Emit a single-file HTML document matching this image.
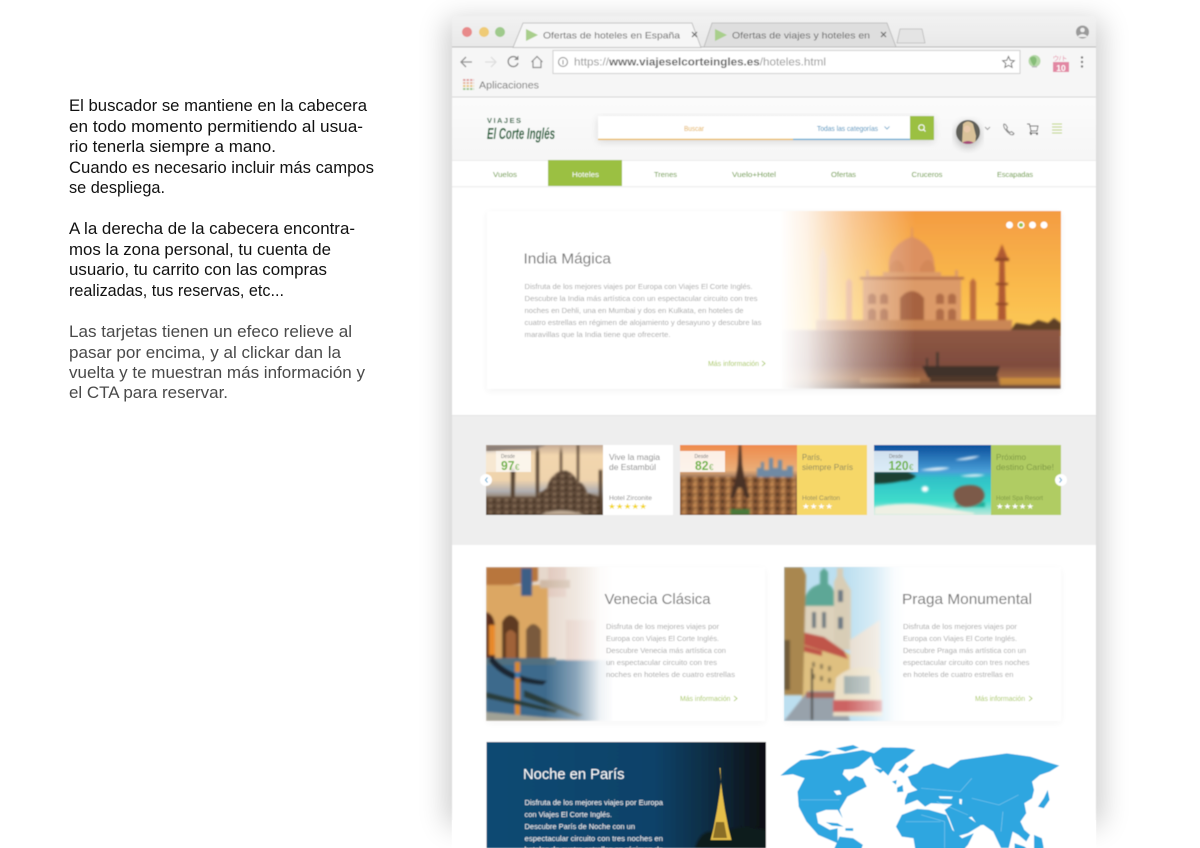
<!DOCTYPE html>
<html lang="es"><head><meta charset="utf-8"><title>Viajes El Corte Inglés</title>
<style>
html,body{margin:0;padding:0;background:#fff;width:1200px;height:848px;overflow:hidden}
svg{display:block}
text{font-family:"Liberation Sans",sans-serif}
</style></head><body>
<svg xmlns="http://www.w3.org/2000/svg" width="1200" height="848" viewBox="0 0 1200 848">
<defs>
<filter id="sh" x="-10%" y="-10%" width="120%" height="120%"><feGaussianBlur stdDeviation="14"/></filter>
<filter id="s4" x="-10%" y="-20%" width="120%" height="140%"><feGaussianBlur stdDeviation="4"/></filter>
<filter id="b" x="-2%" y="-2%" width="104%" height="104%"><feGaussianBlur stdDeviation="0.42"/></filter>
<filter id="b1" x="-5%" y="-5%" width="110%" height="110%"><feGaussianBlur stdDeviation="1"/></filter>
<linearGradient id="sky" x1="0" y1="0" x2="0" y2="1"><stop offset="0" stop-color="#f49c42"/><stop offset=".55" stop-color="#f9b74b"/><stop offset="1" stop-color="#fdcb57"/></linearGradient>
<linearGradient id="water" x1="0" y1="0" x2="0" y2="1"><stop offset="0" stop-color="#8f5844"/><stop offset=".6" stop-color="#7f4c3e"/><stop offset=".82" stop-color="#a56c45"/><stop offset="1" stop-color="#5a4136"/></linearGradient>
<linearGradient id="fadeH" x1="0" y1="0" x2="1" y2="0"><stop offset="0" stop-color="#fff"/><stop offset=".2" stop-color="#fff" stop-opacity=".86"/><stop offset=".55" stop-color="#fff" stop-opacity=".42"/><stop offset="1" stop-color="#fff" stop-opacity="0"/></linearGradient>
<linearGradient id="fadeC" x1="0" y1="0" x2="1" y2="0"><stop offset="0" stop-color="#fff" stop-opacity="0"/><stop offset=".45" stop-color="#fff" stop-opacity=".4"/><stop offset=".8" stop-color="#fff" stop-opacity=".92"/><stop offset="1" stop-color="#fff"/></linearGradient>
<linearGradient id="header" x1="0" y1="0" x2="0" y2="1"><stop offset="0" stop-color="#fbfbfb"/><stop offset="1" stop-color="#f6f6f6"/></linearGradient>
<linearGradient id="tabbar" x1="0" y1="0" x2="0" y2="1"><stop offset="0" stop-color="#f2f2f2"/><stop offset="1" stop-color="#e8e8e8"/></linearGradient>
<linearGradient id="noche" x1="0" y1="0" x2="1" y2="0"><stop offset="0" stop-color="#0b4a73"/><stop offset=".6" stop-color="#0a4269"/><stop offset=".8" stop-color="#0c2c42"/><stop offset="1" stop-color="#0c0e11"/></linearGradient>
<linearGradient id="ist" x1="0" y1="0" x2="0" y2="1"><stop offset="0" stop-color="#c4aa94"/><stop offset=".15" stop-color="#f2d6ae"/><stop offset=".5" stop-color="#efd3ad"/><stop offset=".66" stop-color="#b0aeb0"/><stop offset=".78" stop-color="#8a7560"/><stop offset="1" stop-color="#54402f"/></linearGradient>
<linearGradient id="par" x1="0" y1="0" x2="0" y2="1"><stop offset="0" stop-color="#ee8b4c"/><stop offset=".36" stop-color="#eaae78"/><stop offset=".46" stop-color="#a07a60"/><stop offset="1" stop-color="#6f4528"/></linearGradient>
<linearGradient id="car" x1="0" y1="0" x2="0" y2="1"><stop offset="0" stop-color="#0b4f9c"/><stop offset=".38" stop-color="#4aa0d8"/><stop offset=".47" stop-color="#2fc0c8"/><stop offset=".8" stop-color="#3fdccb"/><stop offset="1" stop-color="#bfe8dc"/></linearGradient>
<pattern id="city" width="11" height="7" patternUnits="userSpaceOnUse"><rect width="11" height="7" fill="#8a5a36"/><rect x="0" y="0" width="4" height="3" fill="#c98c54"/><rect x="6" y="3" width="3" height="3" fill="#4a2f20"/><rect x="1" y="5" width="3" height="1" fill="#dca566"/></pattern>
<pattern id="city2" width="8" height="6" patternUnits="userSpaceOnUse"><rect width="8" height="6" fill="#5f4a38"/><rect x="1" y="1" width="3" height="2" fill="#8d755d"/><rect x="5" y="3" width="2" height="2" fill="#2e2219"/></pattern>
<clipPath id="cHero"><rect x="780" y="211" width="281" height="178"/></clipPath>
<clipPath id="c1"><rect x="486" y="445" width="117" height="70"/></clipPath>
<clipPath id="c2"><rect x="680" y="445" width="117" height="70"/></clipPath>
<clipPath id="c3"><rect x="874" y="445" width="117" height="70"/></clipPath>
<clipPath id="cV"><rect x="486" y="567" width="127" height="154"/></clipPath>
<clipPath id="cP"><rect x="784" y="567" width="122" height="154"/></clipPath>
<clipPath id="cN"><rect x="486" y="742" width="280" height="106"/></clipPath>
<clipPath id="cAv"><circle cx="968" cy="132" r="12"/></clipPath>
</defs>

<rect width="1200" height="848" fill="#fff"/>

<!-- Left copy -->
<g font-size="16.500" fill="#111">
<text x="69" y="111" textLength="298" lengthAdjust="spacingAndGlyphs">El buscador se mantiene en la cabecera</text>
<text x="69" y="132" textLength="294" lengthAdjust="spacingAndGlyphs">en todo momento permitiendo al usua-</text>
<text x="69" y="152" textLength="207" lengthAdjust="spacingAndGlyphs">rio tenerla siempre a mano.</text>
<text x="69" y="173" textLength="305" lengthAdjust="spacingAndGlyphs">Cuando es necesario incluir más campos</text>
<text x="69" y="193" textLength="96" lengthAdjust="spacingAndGlyphs">se despliega.</text>
<text x="69" y="234" textLength="286" lengthAdjust="spacingAndGlyphs">A la derecha de la cabecera encontra-</text>
<text x="69" y="255" textLength="262" lengthAdjust="spacingAndGlyphs">mos la zona personal, tu cuenta de</text>
<text x="69" y="275" textLength="258" lengthAdjust="spacingAndGlyphs">usuario, tu carrito con las compras</text>
<text x="69" y="296" textLength="215" lengthAdjust="spacingAndGlyphs">realizadas, tus reservas, etc...</text>
</g>
<g font-size="16.500" fill="#4a4a4a">
<text x="69" y="337" textLength="283" lengthAdjust="spacingAndGlyphs">Las tarjetas tienen un efeco relieve al</text>
<text x="69" y="358" textLength="272" lengthAdjust="spacingAndGlyphs">pasar por encima, y al clickar dan la</text>
<text x="69" y="378" textLength="296" lengthAdjust="spacingAndGlyphs">vuelta y te muestran más información y</text>
<text x="69" y="398" textLength="159" lengthAdjust="spacingAndGlyphs">el CTA para reservar.</text>
</g>

<!-- Window shadow -->
<rect x="446" y="20" width="656" height="806" fill="#000" opacity=".2" filter="url(#sh)"/>
<rect x="452" y="820" width="644" height="28" fill="#fff"/>

<g filter="url(#b)">
<!-- Window -->
<path d="M452 22q0-6 6-6h632q6 0 6 6v826H452z" fill="#fff"/>
<path d="M452 22q0-6 6-6h632q6 0 6 6v25H452z" fill="url(#tabbar)"/>
<rect x="452" y="47" width="644" height="50" fill="#f6f6f6"/>
<rect x="452" y="46.500" width="644" height="1" fill="#b8b8b8"/>
<rect x="452" y="96.500" width="644" height="1" fill="#d5d5d5"/>
<circle cx="467" cy="32" r="5" fill="#e88a8a"/><circle cx="484" cy="32" r="5" fill="#efcb76"/><circle cx="500" cy="32" r="5" fill="#9fca8c"/>
<!-- tabs -->
<path d="M897 43l3-14h22l3 14z" fill="#e4e4e4" stroke="#bbb" stroke-width=".8"/>
<path d="M704 47l8-24h175l9 24z" fill="#dedede" stroke="#b5b5b5" stroke-width=".8"/>
<path d="M513 47.500l10-24.500h169l9 24.500z" fill="#f6f6f6" stroke="#b5b5b5" stroke-width=".8"/>
<path d="M526 29l12 6-12 6z" fill="#a9cf8c"/>
<path d="M715 29l12 6-12 6z" fill="#a9cf8c"/>
<text x="543" y="38.500" font-size="9.500" fill="#666" textLength="137" lengthAdjust="spacingAndGlyphs">Ofertas de hoteles en España</text>
<text x="732" y="38.500" font-size="9.500" fill="#666" textLength="138" lengthAdjust="spacingAndGlyphs">Ofertas de viajes y hoteles en</text>
<path d="M692 32l5 5M697 32l-5 5M881 32l5 5M886 32l-5 5" stroke="#666" stroke-width="1.200"/>
<circle cx="1082.500" cy="32" r="6.500" fill="#9a9a9a"/><circle cx="1082.500" cy="30" r="2.300" fill="#eee"/><path d="M1078 36q4.500-4 9 0v1h-9z" fill="#eee"/>
<!-- toolbar -->
<path d="M472 62h-11M466 57l-5 5 5 5" fill="none" stroke="#909090" stroke-width="1.300"/>
<path d="M485 62h11M491 57l5 5-5 5" fill="none" stroke="#dedede" stroke-width="1.300"/>
<path d="M517.500 59a5 5 0 1 0 .5 4" fill="none" stroke="#8a8a8a" stroke-width="1.400"/><path d="M518.500 55.500v4.500h-4.500z" fill="#8a8a8a"/>
<path d="M531.500 62l5.500-5.500 5.500 5.500M533 61v6.500h8V61" fill="none" stroke="#8a8a8a" stroke-width="1.200"/>
<rect x="553" y="50.500" width="467" height="23" fill="#fff" stroke="#d0d0d0"/>
<circle cx="563" cy="62" r="4.500" fill="none" stroke="#888"/><path d="M563 60v4.500" stroke="#888"/>
<text x="574" y="65.500" font-size="11" fill="#999" textLength="252" lengthAdjust="spacingAndGlyphs">https://<tspan fill="#666" font-weight="bold">www.viajeselcorteingles.es</tspan>/hoteles.html</text>
<path d="M1008.500 56.500l1.700 3.800 4.100.4-3.100 2.700.9 4-3.600-2.100-3.600 2.100.9-4-3.100-2.700 4.100-.4z" fill="none" stroke="#777"/>
<circle cx="1034.500" cy="61" r="6" fill="#b4d8a6"/><path d="M1030 58q4-3 6 0t-2 8q-3-3-4-8z" fill="#86bd78"/><rect x="1032" y="66" width="5" height="1.500" fill="#bbb"/>
<rect x="1053" y="62" width="16" height="10" fill="#e287a3"/><text x="1061" y="71" font-size="8.500" font-weight="bold" fill="#fff" text-anchor="middle">10</text><text x="1060" y="60.500" font-size="6.500" fill="#e58aa5" text-anchor="middle">ウ/ト</text>
<circle cx="1082" cy="57.500" r="1.200" fill="#777"/><circle cx="1082" cy="62" r="1.200" fill="#777"/><circle cx="1082" cy="66.500" r="1.200" fill="#777"/>
<g fill="none" stroke-width="2" stroke-dasharray="2.500 1"><path d="M463 80h11" stroke="#e0a0a0"/><path d="M463 83h11" stroke="#e8b8a0"/><path d="M463 86h11" stroke="#e8c880"/><path d="M463 89h11" stroke="#a0c890"/></g>
<text x="479" y="88.500" font-size="10" fill="#777" textLength="60" lengthAdjust="spacingAndGlyphs">Aplicaciones</text>

<!-- Header -->
<rect x="452" y="97.500" width="644" height="63" fill="url(#header)"/>
<text x="487" y="123" font-size="7.500" font-weight="bold" fill="#1d5f38" textLength="34">VIAJES</text>
<text x="487" y="139" font-family="Liberation Serif" font-style="italic" font-size="16" font-weight="bold" fill="#125c30" textLength="68" lengthAdjust="spacingAndGlyphs">El Corte Inglés</text>
<rect x="598" y="118" width="336" height="24" fill="#000" opacity=".12" filter="url(#s4)"/>
<rect x="598" y="116" width="336" height="24" fill="#fff"/>
<rect x="598" y="138.800" width="195" height="1.200" fill="#e9b43e"/><rect x="793" y="138.800" width="117" height="1.200" fill="#4ba0cf"/>
<rect x="910" y="116" width="24" height="24" fill="#9bc043"/>
<circle cx="921.500" cy="127.500" r="2.800" fill="none" stroke="#fff"/><path d="M923.500 129.500l2 2" stroke="#fff"/>
<text x="684" y="131" font-size="7" fill="#e3ad44" textLength="20" lengthAdjust="spacingAndGlyphs">Buscar</text>
<text x="817" y="131" font-size="7" fill="#3e8fbd" textLength="61" lengthAdjust="spacingAndGlyphs">Todas las categorías</text>
<path d="M884.500 126.500l2.500 2.500 2.500-2.500" fill="none" stroke="#5b9dc5" stroke-width=".8"/>
<circle cx="968" cy="135" r="13" fill="#000" opacity=".22" filter="url(#s4)"/>
<circle cx="968" cy="132" r="12" fill="#5f5f58"/>
<g clip-path="url(#cAv)"><path d="M962 144l1-20q5-5 10 0l3 12-1 8z" fill="#d9c29a"/><path d="M958 146q10-10 20 0z" fill="#a54a78"/><circle cx="967" cy="129" r="3.500" fill="#e8c8aa"/></g>
<path d="M985 127l2.500 2.500 2.500-2.500" fill="none" stroke="#999"/>
<path d="M1004 124q-1 2 1 5t5.500 5.500q2.500 1 3.500-1l-2.500-2-1.500 1q-2-1-3.500-3.500l1-1.500-2-3z" fill="none" stroke="#777" stroke-width=".9"/>
<path d="M1027 124h2.500l1.500 7h6l1-5h-8M1031 131l-1 2h8" fill="none" stroke="#666" stroke-width=".9"/><circle cx="1031" cy="134" r="1" fill="#666"/><circle cx="1037" cy="134" r="1" fill="#666"/>
<path d="M1052 124h10M1052 127h10M1052 130h10M1052 133h10" stroke="#bcd470" stroke-width="1"/>

<!-- Nav -->
<rect x="452" y="160" width="644" height="1" fill="#ececec"/>
<rect x="452" y="161" width="644" height="25" fill="#fff"/>
<rect x="452" y="186" width="644" height="1.500" fill="#f0f0f0"/>
<rect x="548" y="160" width="74" height="26" fill="#9bc043"/>
<g font-size="7.500" fill="#5f962a" text-anchor="middle">
<text x="505" y="177" textLength="24" lengthAdjust="spacingAndGlyphs">Vuelos</text>
<text x="585.500" y="177" fill="#fff" textLength="27" lengthAdjust="spacingAndGlyphs">Hoteles</text>
<text x="665.500" y="177" textLength="23" lengthAdjust="spacingAndGlyphs">Trenes</text>
<text x="754" y="177" textLength="44" lengthAdjust="spacingAndGlyphs">Vuelo+Hotel</text>
<text x="843.500" y="177" textLength="25" lengthAdjust="spacingAndGlyphs">Ofertas</text>
<text x="927" y="177" textLength="31" lengthAdjust="spacingAndGlyphs">Cruceros</text>
<text x="1015" y="177" textLength="36" lengthAdjust="spacingAndGlyphs">Escapadas</text>
</g>

<!-- Hero -->
<rect x="487" y="213" width="574" height="178" fill="#000" opacity=".05" filter="url(#s4)"/>
<rect x="487" y="211" width="574" height="178" fill="#fff"/>
<g clip-path="url(#cHero)">
 <rect x="780" y="211" width="281" height="125" fill="url(#sky)"/>
 <g filter="url(#b1)">
 <path d="M911.500 227h1l.5 10q13 5 19 17 4 10 1 20h-43q-3-10 1-20 6-12 20-17z" fill="#dc9060"/>
 <path d="M889 274v-6q4-8 8-8t7 8v6zM920 274v-6q4-8 8-8t7 8v6z" fill="#d38858"/>
 <path d="M863 320v-40l3-4v-6h3v6h14v-4h58v4h14v-6h3v6l3 4v40z" fill="#dc9a68"/>
 <path d="M900 320v-22q12-14 24 0v22z" fill="#a66240"/>
 <path d="M868 320v-9q4-5 8 0v9zM880 320v-9q4-5 8 0v9zM936 320v-9q4-5 8 0v9zM948 320v-9q4-5 8 0v9zM868 304v-8q4-5 8 0v8zM880 304v-8q4-5 8 0v8zM936 304v-8q4-5 8 0v8zM948 304v-8q4-5 8 0v8z" fill="#b06d48"/>
 <rect x="860" y="277" width="104" height="2.500" fill="#b5704a"/>
 <path d="M998 320l1.500-62h-3l5.500-14 5.500 14h-3l1.500 62z" fill="#b05a30"/><rect x="995" y="258" width="14" height="3" fill="#8c4526"/><rect x="996" y="283" width="12" height="2" fill="#8c4526"/><rect x="996" y="303" width="12" height="2" fill="#8c4526"/>
 <path d="M970 320v-38l3-4 3 4v38z" fill="#c06e3e"/>
 <path d="M846 320v-38l3-4 3 4v38z" fill="#e2986a"/>
 <path d="M819 320v-62l4-12 4 12v62z" fill="#e6a878"/>
 <rect x="816" y="320" width="196" height="11" fill="#ca8755"/>
 <path d="M1010 331l6-8 14 2 8-5 10 3 6-5 7 5v8z" fill="#5e4028"/>
 <rect x="780" y="330" width="281" height="59" fill="url(#water)"/>
 <path d="M922 366h78l-4 12h-68z" fill="#3f322c"/><rect x="930" y="376" width="68" height="6" fill="#4f382c"/>
 <path d="M936 366v-14h3v14zM926 366v-8h2v8z" fill="#4a3a30"/>
 <rect x="1000" y="378" width="61" height="7" fill="#d99a3c" opacity=".75"/><rect x="860" y="378" width="60" height="5" fill="#c49060" opacity=".5"/>
 </g>
 <rect x="780" y="211" width="135" height="178" fill="url(#fadeH)"/>
</g>
<circle cx="1009.500" cy="225" r="3.500" fill="#fff"/><circle cx="1021" cy="225" r="3.500" fill="#fff" /><circle cx="1021" cy="225" r="2" fill="#9bc043"/><circle cx="1032.500" cy="225" r="3.500" fill="#fff"/><circle cx="1044" cy="225" r="3.500" fill="#fff"/>
<text x="523.500" y="263.500" font-size="15" fill="#777" textLength="87.500" lengthAdjust="spacingAndGlyphs">India Mágica</text>
<g font-size="7" fill="#a9a9a9">
<text x="524.500" y="289" textLength="228" lengthAdjust="spacingAndGlyphs">Disfruta de los mejores viajes por Europa con Viajes El Corte Inglés.</text>
<text x="524.500" y="301" textLength="233" lengthAdjust="spacingAndGlyphs">Descubre la India más artística con un espectacular circuito con tres</text>
<text x="524.500" y="313" textLength="219" lengthAdjust="spacingAndGlyphs">noches en Dehli, una en Mumbai y dos en Kulkata,  en hoteles de</text>
<text x="524.500" y="325" textLength="237" lengthAdjust="spacingAndGlyphs">cuatro estrellas en régimen de alojamiento y desayuno y descubre las</text>
<text x="524.500" y="337" textLength="146" lengthAdjust="spacingAndGlyphs">maravillas que la India tiene que ofrecerte.</text>
</g>
<text x="708" y="366" font-size="7" fill="#a9c95c" textLength="51" lengthAdjust="spacingAndGlyphs">Más información</text>
<path d="M762 361l3 2.500-3 2.500" fill="none" stroke="#9bc043" stroke-width=".8"/>

<!-- Band -->
<rect x="452" y="415" width="644" height="130" fill="#eeeeee"/>
<rect x="452" y="415" width="644" height="1" fill="#e4e4e4"/>

<!-- Card 1 -->
<rect x="486" y="445" width="187" height="70" fill="#fff"/>
<g clip-path="url(#c1)"><rect x="486" y="445" width="117" height="70" fill="url(#ist)"/>
<g filter="url(#b1)" fill="#4e3b2c">
<path d="M486 445h60l-10 4-30 1-20 2z" fill="#8c8078"/>
<path d="M511 515v-44l-1-2 3-1 2 3-1 44zM536 515v-62l1.500-8 1.500 8v62zM560 490v-36l1-8 1 8v36zM577 490v-45h2v45zM599 470h3v45h-3z"/>
<path d="M538 515v-22q8-2 10-8 3-10 13-14 10-2 16 10 8 3 10 12l12 4v18z" fill="url(#city2)"/>
<path d="M486 497h52v18h-52z" fill="url(#city2)"/><path d="M540 515q20-9 45 0z" fill="#c0ac96"/>
</g></g>
<rect x="486" y="451" width="45" height="21" fill="#fff" opacity=".45"/><rect x="496" y="451" width="35" height="21" fill="#fff" opacity=".55"/>
<text x="501" y="458" font-size="5.500" fill="#777" textLength="14" lengthAdjust="spacingAndGlyphs">Desde</text>
<text x="501" y="470" font-size="13" font-weight="bold" fill="#6db33f" textLength="13.500" lengthAdjust="spacingAndGlyphs">97</text><text x="515" y="470" font-size="8" fill="#6db33f">€</text>
<text x="609" y="460" font-size="8.500" fill="#888" textLength="51" lengthAdjust="spacingAndGlyphs">Vive la magia</text>
<text x="609" y="470" font-size="8.500" fill="#888" textLength="47" lengthAdjust="spacingAndGlyphs">de Estambúl</text>
<text x="609" y="500" font-size="6.500" fill="#888" textLength="43" lengthAdjust="spacingAndGlyphs">Hotel Zirconite</text>
<text x="608" y="509" font-size="8" fill="#f3d720" textLength="39" lengthAdjust="spacingAndGlyphs">★★★★★</text>

<!-- Card 2 -->
<rect x="680" y="445" width="187" height="70" fill="#f6d768"/>
<g clip-path="url(#c2)"><rect x="680" y="445" width="117" height="70" fill="url(#par)"/>
<g filter="url(#b1)">
<path d="M757 478v-10h4v-6h3v8h5v-12h4v10h5v-8h4v10h5v-4h6v12z" fill="#6f8aa4"/>
<rect x="680" y="477" width="117" height="38" fill="url(#city)"/>
<rect x="730" y="509" width="20" height="6" fill="#4a7a3a"/>
<path d="M739 445h2l1 20 2 12 6 21h-4l-4-10h-4l-4 10h-4l6-21 2-12z" fill="#4a3228"/>
</g></g>
<rect x="680" y="451" width="45" height="21" fill="#fff" opacity=".85"/>
<text x="694.500" y="458" font-size="5.500" fill="#777" textLength="14" lengthAdjust="spacingAndGlyphs">Desde</text>
<text x="695" y="470" font-size="13" font-weight="bold" fill="#6db33f" textLength="13.500" lengthAdjust="spacingAndGlyphs">82</text><text x="709" y="470" font-size="8" fill="#6db33f">€</text>
<text x="802" y="460" font-size="8.500" fill="#8f8a60" textLength="20" lengthAdjust="spacingAndGlyphs">París,</text>
<text x="802" y="470" font-size="8.500" fill="#8f8a60" textLength="51" lengthAdjust="spacingAndGlyphs">siempre París</text>
<text x="802" y="500" font-size="6.500" fill="#8f8a60" textLength="38" lengthAdjust="spacingAndGlyphs">Hotel Carlton</text>
<text x="802" y="509" font-size="8" fill="#fff" textLength="31" lengthAdjust="spacingAndGlyphs">★★★★</text>

<!-- Card 3 -->
<rect x="874" y="445" width="187" height="70" fill="#b0cc63"/>
<g clip-path="url(#c3)"><rect x="874" y="445" width="117" height="70" fill="url(#car)"/>
<g filter="url(#b1)">
<path d="M920 470q20-4 30-2-12 4-30 2zM955 460q15-4 25-4-10 5-25 4zM960 476q15-3 25-1-10 3-25 1z" fill="#e8f2f8"/>
<path d="M874 472h34l8 4q-4 5-14 5-14 3-28 3z" fill="#1f3f32"/>
<path d="M874 507q30-6 60-1l40 7v2h-100z" fill="#eef0e4"/>
<path d="M955 507h30v-5l-24-1z" fill="#1fb09a"/>
<path d="M954 497q-2-8 8-11 14-3 20 3 6 8-2 14-8 5-16 4-8-2-10-10z" fill="#7c5a48"/>
<ellipse cx="925" cy="489" rx="3.500" ry="3" fill="#fff"/>
</g></g>
<rect x="874" y="451" width="44" height="21" fill="#fff" opacity=".8"/>
<text x="889" y="458" font-size="5.500" fill="#777" textLength="14" lengthAdjust="spacingAndGlyphs">Desde</text>
<text x="888.500" y="470" font-size="13" font-weight="bold" fill="#6db33f" textLength="20" lengthAdjust="spacingAndGlyphs">120</text><text x="909" y="470" font-size="8" fill="#6db33f">€</text>
<text x="996" y="460" font-size="8.500" fill="#7f9a45" textLength="30" lengthAdjust="spacingAndGlyphs">Próximo</text>
<text x="996" y="470" font-size="8.500" fill="#7f9a45" textLength="58" lengthAdjust="spacingAndGlyphs">destino Caribe!</text>
<text x="996" y="500" font-size="6.500" fill="#7f9a45" textLength="47" lengthAdjust="spacingAndGlyphs">Hotel Spa Resort</text>
<text x="996" y="509" font-size="8" fill="#fff" textLength="38" lengthAdjust="spacingAndGlyphs">★★★★★</text>
<circle cx="486" cy="480" r="6" fill="#fff"/><path d="M487.500 477.500l-2 2.500 2 2.500" fill="none" stroke="#4ba0cf"/>
<circle cx="1061" cy="480" r="6" fill="#fff"/><path d="M1059.500 477.500l2 2.500-2 2.500" fill="none" stroke="#4ba0cf"/>

<!-- Venecia -->
<rect x="487" y="569" width="278" height="154" fill="#000" opacity=".04" filter="url(#s4)"/>
<rect x="486" y="567" width="279" height="154" fill="#fff"/>
<g clip-path="url(#cV)">
<rect x="486" y="567" width="127" height="154" fill="#e6d8cc"/>
<g filter="url(#b1)">
<path d="M486 567h52v14l-52 8z" fill="#b8763c"/>
<path d="M486 585h62v78h-62z" fill="#dca763"/>
<path d="M486 612q8 2 9 14v38h-9z" fill="#5a2e1a"/>
<path d="M489 625h6v30h-6z" fill="#e88a2a"/>
<path d="M502 664v-42q8-14 17 0v42z" fill="#5e3a24"/>
<path d="M506 664v-30q4-8 10 0v30z" fill="#a06238"/>
<path d="M526 664v-34q7-12 15 0v34z" fill="#7a5a3c"/>
<rect x="521" y="568" width="11" height="28" fill="#3c5f86"/>
<path d="M548 567h18v30h-18zM566 620h30v40h-30z" fill="#e0c8bc"/>
<path d="M540 580h30v8h-30z" fill="#cfb9a6"/>
<rect x="486" y="660" width="127" height="61" fill="#3c6a8c"/>
<path d="M486 658h70v7h-70z" fill="#516f80"/>
<path d="M492 655q15 22 55 26l-4 4q-38-2-54-24z" fill="#1e2730"/>
<rect x="515" y="662" width="5" height="59" fill="#d88a28"/><rect x="515" y="672" width="5" height="6" fill="#3a78a8"/>
<path d="M486 692l72 18-3 3-69-15zM524 690l60 25-6 2-54-20z" fill="#2a3d3a"/>
<path d="M486 712l100 9h-100z" fill="#a0a296"/>
</g>
<rect x="545" y="567" width="69" height="154" fill="url(#fadeC)"/>
</g>
<text x="604.500" y="604" font-size="15" fill="#777" textLength="106" lengthAdjust="spacingAndGlyphs">Venecia Clásica</text>
<g font-size="7" fill="#a9a9a9">
<text x="606" y="629" textLength="113" lengthAdjust="spacingAndGlyphs">Disfruta de los mejores viajes por</text>
<text x="606" y="641" textLength="113" lengthAdjust="spacingAndGlyphs">Europa con Viajes El Corte Inglés.</text>
<text x="606" y="653" textLength="120" lengthAdjust="spacingAndGlyphs">Descubre Venecia más artística con</text>
<text x="606" y="665" textLength="111" lengthAdjust="spacingAndGlyphs">un espectacular circuito con tres</text>
<text x="606" y="677" textLength="129" lengthAdjust="spacingAndGlyphs">noches  en hoteles de cuatro estrellas</text>
</g>
<text x="680" y="701" font-size="7" fill="#a9c95c" textLength="50.500" lengthAdjust="spacingAndGlyphs">Más información</text>
<path d="M734 696l3 2.500-3 2.500" fill="none" stroke="#9bc043" stroke-width=".8"/>

<!-- Praga -->
<rect x="785" y="569" width="276" height="154" fill="#000" opacity=".04" filter="url(#s4)"/>
<rect x="784" y="567" width="277" height="154" fill="#fff"/>
<g clip-path="url(#cP)">
<rect x="784" y="567" width="122" height="154" fill="#bcdff0"/>
<g filter="url(#b1)">
<path d="M803 650v-45h33v45z" fill="#ddd2bc"/>
<path d="M803 606q2-18 17-22v-12l4-4 4 4v12q8 4 8 22z" fill="#5da796"/>
<rect x="812" y="612" width="4" height="16" fill="#6f7a80"/><rect x="822" y="612" width="4" height="16" fill="#6f7a80"/>
<path d="M834 650v-68l3-6v-8h6v8l3 6 5 8v60z" fill="#d8cdb6"/><rect x="838" y="590" width="5" height="12" fill="#6d7a84"/><rect x="838" y="617" width="5" height="12" fill="#6d7a84"/>
<path d="M802 635l28 8 24 14v50h-52z" fill="#dfc080"/>
<path d="M802 632l22 5 20 14 4 8-50-16zM802 645l20 6v5l-20-5z" fill="#c05548"/>
<g fill="#8e7e58"><rect x="812" y="662" width="3" height="5"/><rect x="820" y="664" width="3" height="5"/><rect x="828" y="666" width="3" height="5"/><rect x="812" y="674" width="3" height="5"/><rect x="820" y="676" width="3" height="5"/><rect x="828" y="678" width="3" height="5"/></g>
<path d="M850 640l30-20v50h-30z" fill="#e6ddd0"/>
<path d="M784 567h18l4 8-3 120H784z" fill="#a9874f"/><path d="M784 640h6v50h-6z" fill="#6f5a38"/>
<path d="M784 721l24-30h34l8 30z" fill="#98a2ab"/><path d="M806 692h34v6h-34z" fill="#a86a60"/>
<path d="M833 716l3-38q14-14 38-10 6 2 7 12l1 36z" fill="#eadfc6"/>
<path d="M833 700h49v12h-49z" fill="#cc6464"/>
<path d="M844 676h26v18h-26z" fill="#a6b2b0"/>
<rect x="811" y="668" width="2" height="52" fill="#3a3a36"/>
</g>
<rect x="846" y="567" width="60" height="154" fill="url(#fadeC)"/>
</g>
<text x="902" y="604" font-size="15" fill="#777" textLength="130" lengthAdjust="spacingAndGlyphs">Praga Monumental</text>
<g font-size="7" fill="#a9a9a9">
<text x="903" y="629" textLength="114" lengthAdjust="spacingAndGlyphs">Disfruta de los mejores viajes por</text>
<text x="903" y="641" textLength="114" lengthAdjust="spacingAndGlyphs">Europa con Viajes El Corte Inglés.</text>
<text x="903" y="653" textLength="123" lengthAdjust="spacingAndGlyphs">Descubre Praga más artística con un</text>
<text x="903" y="665" textLength="126.500" lengthAdjust="spacingAndGlyphs">espectacular circuito con tres noches</text>
<text x="903" y="677" textLength="110.500" lengthAdjust="spacingAndGlyphs">en hoteles de cuatro estrellas en</text>
</g>
<text x="975" y="701" font-size="7" fill="#a9c95c" textLength="50" lengthAdjust="spacingAndGlyphs">Más información</text>
<path d="M1029 696l3 2.500-3 2.500" fill="none" stroke="#9bc043" stroke-width=".8"/>

<!-- Noche -->
<rect x="486.500" y="742" width="279.500" height="106" fill="url(#noche)"/>
<g clip-path="url(#cN)">
<path d="M695 848q6-18 18-16 8-8 18-2 12-6 35 0v18z" fill="#0e1a1e" filter="url(#b1)"/>
<path d="M719.500 768h1l.5 14 1.500 12 2.500 16 3.500 18 3 12h-21l3-12 3.500-18 2.500-16 1.500-12z" fill="#e4bd48"/>
<path d="M716 822h8l3 16h-14z" fill="#8a6e28"/>
</g>
<text x="523" y="779" font-size="14.500" fill="#fff" textLength="101.500" lengthAdjust="spacingAndGlyphs">Noche en París</text>
<g font-size="7.300" fill="#f2f4f6">
<text x="524.500" y="805" textLength="138.500" lengthAdjust="spacingAndGlyphs">Disfruta de los mejores viajes por Europa</text>
<text x="524.500" y="817" textLength="87.500" lengthAdjust="spacingAndGlyphs">con Viajes El Corte Inglés.</text>
<text x="524.500" y="829" textLength="110.500" lengthAdjust="spacingAndGlyphs">Descubre París de Noche con un</text>
<text x="524.500" y="841" textLength="138.500" lengthAdjust="spacingAndGlyphs">espectacular circuito con tres noches  en</text>
<text x="524.500" y="852" textLength="138.500" lengthAdjust="spacingAndGlyphs">hoteles de cuatro estrellas en régimen de</text>
</g>

<!-- Map -->
<g transform="translate(470 735) scale(.389 .333)" fill="#2fa6e0">
<path d="M798 122L820 100L850 75L905 70L925 60L960 55L1010 45L1040 55L1020 75L1000 95L985 102L962 104L958 118L975 138L990 122L1010 130L1020 155L995 170L970 185L960 205L950 225L958 250L945 225L915 225L890 235L895 265L925 285L945 280L945 325L925 315L895 300L865 260L845 215L842 170L860 130L830 118Z"/>
<path d="M1030 62L1060 37L1120 38L1145 45L1120 70L1095 85L1075 122L1055 100L1040 90Z"/>
<path d="M1118 195L1125 175L1150 165L1135 150L1125 125L1150 115L1165 95L1190 85L1215 95L1230 100L1260 75L1320 65L1380 55L1440 65L1480 80L1515 92L1490 110L1465 120L1445 140L1450 165L1445 190L1425 205L1430 235L1415 260L1425 285L1440 300L1430 320L1410 300L1395 290L1385 339L1365 339L1345 290L1320 270L1305 272L1300 262L1290 245L1282 248L1312 272L1280 295L1250 305L1232 250L1220 225L1240 208L1185 205L1170 215L1150 195L1118 210Z"/>
<path d="M1095 275L1110 240L1150 222L1180 225L1225 240L1240 285L1265 310L1295 295L1280 330L1268 345H1145L1140 310L1110 305Z"/>
<path d="M935 345L950 305L985 310L1010 330L1005 345Z"/>
<path d="M1460 215L1475 190L1485 165L1490 195L1475 220ZM1450 300L1470 310L1475 340L1450 345ZM1400 325L1425 335L1435 345H1400ZM1100 105L1120 85L1128 95L1115 115ZM1040 100L1065 105L1055 115ZM1085 140L1097 135L1095 149ZM1098 158L1112 150L1114 170L1098 172ZM915 262L945 265L960 275L930 272ZM965 280L985 280L985 288L965 287Z"/>
<path d="M860 60L900 45L930 50L905 65ZM940 40L985 30L1000 38L965 50Z"/>
</g>
<g transform="translate(470 735) scale(.389 .333)" fill="none" stroke="#bfe3f6" stroke-width="1.500" opacity=".6">
<path d="M850 195h100M1160 240l60 20v80M1200 200l80 40M1290 190l70 20 50-30M1160 160l100 10 30-40M1120 260h90M1370 230l-5 60"/>
</g>
<g transform="translate(470 735) scale(.389 .333)" fill="#fff"><path d="M935 168l15-2 5 12-12 2zM1205 184l36 1-3 7-30-1zM1258 192l7 1-1 16-6-3z"/></g>
</g>
</svg>
</body></html>
